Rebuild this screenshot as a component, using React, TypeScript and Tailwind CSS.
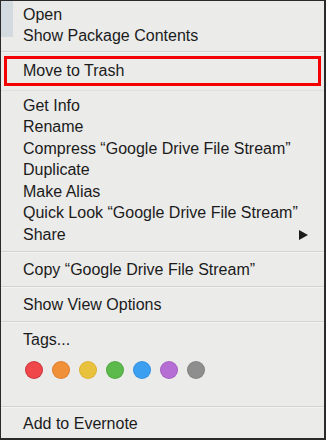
import React from "react";

const Item = ({ children, arrow }: { children: React.ReactNode; arrow?: boolean }) => (
  <div className="flex h-[21.5px] items-center justify-between pl-[22px] pr-[16px]">
    <span>{children}</span>
    {arrow && (
      <svg width="9" height="10" viewBox="0 0 9 10">
        <path d="M0 0 L9 5 L0 10 Z" fill="#1c1c1c" />
      </svg>
    )}
  </div>
);

const Sep = ({ h = "h-[13.5px]" }: { h?: string }) => (
  <div className={`flex flex-col justify-center ${h}`}>
    <div className="h-[2px] border-t border-[#d3d3d2] bg-[#f3f3f2]" />
  </div>
);

const dots = [
  { c: "#f0474b", b: "#c9333a" },
  { c: "#f09039", b: "#e07b2a" },
  { c: "#e9c23d", b: "#dfb12f" },
  { c: "#5cb94b", b: "#4ca83d" },
  { c: "#3d9ff0", b: "#2f8fe0" },
  { c: "#b56ed3", b: "#a45fc3" },
  { c: "#8e8e8e", b: "#808080" },
];

export default function App() {
  return (
    <div
      className="relative h-[440px] w-[326px] overflow-hidden border-t border-l border-r-2 border-b-2 border-[#2a2a2a] bg-[#ebebea] text-[16px] text-[#1b1b1b]"
      style={{ fontFamily: '"Liberation Sans", Arial, sans-serif' }}
    >
      <div className="absolute left-0 top-0 h-[36px] w-[12px] bg-[#d4dbe0]" />
      <div className="relative pt-[3px]">
        <Item>Open</Item>
        <Item>Show Package Contents</Item>
        <Sep h="h-[9px]" />
        <div className="mx-[3px] flex h-[30px] items-center border-[3px] border-[#f40000] pl-[16px]">
          Move to Trash
        </div>
        <div className="flex h-[9px] flex-col justify-center">
          <div className="h-px bg-[#e0e0df]" />
        </div>
        <Item>Get Info</Item>
        <Item>Rename</Item>
        <Item>Compress “Google Drive File Stream”</Item>
        <Item>Duplicate</Item>
        <Item>Make Alias</Item>
        <Item>Quick Look “Google Drive File Stream”</Item>
        <Item arrow>Share</Item>
        <Sep />
        <Item>Copy “Google Drive File Stream”</Item>
        <Sep />
        <Item>Show View Options</Item>
        <Sep />
        <Item>Tags...</Item>
        <div className="flex gap-[11px] pl-[25px] pt-[11px]">
          {dots.map((d, i) => (
            <div
              key={i}
              className="h-[16px] w-[16px] rounded-full"
              style={{ backgroundColor: d.c, boxShadow: `0 0 0 1px ${d.b}` }}
            />
          ))}
        </div>
        <div className="h-[22.5px]" />
        <Sep />
        <Item>Add to Evernote</Item>
      </div>
    </div>
  );
}
